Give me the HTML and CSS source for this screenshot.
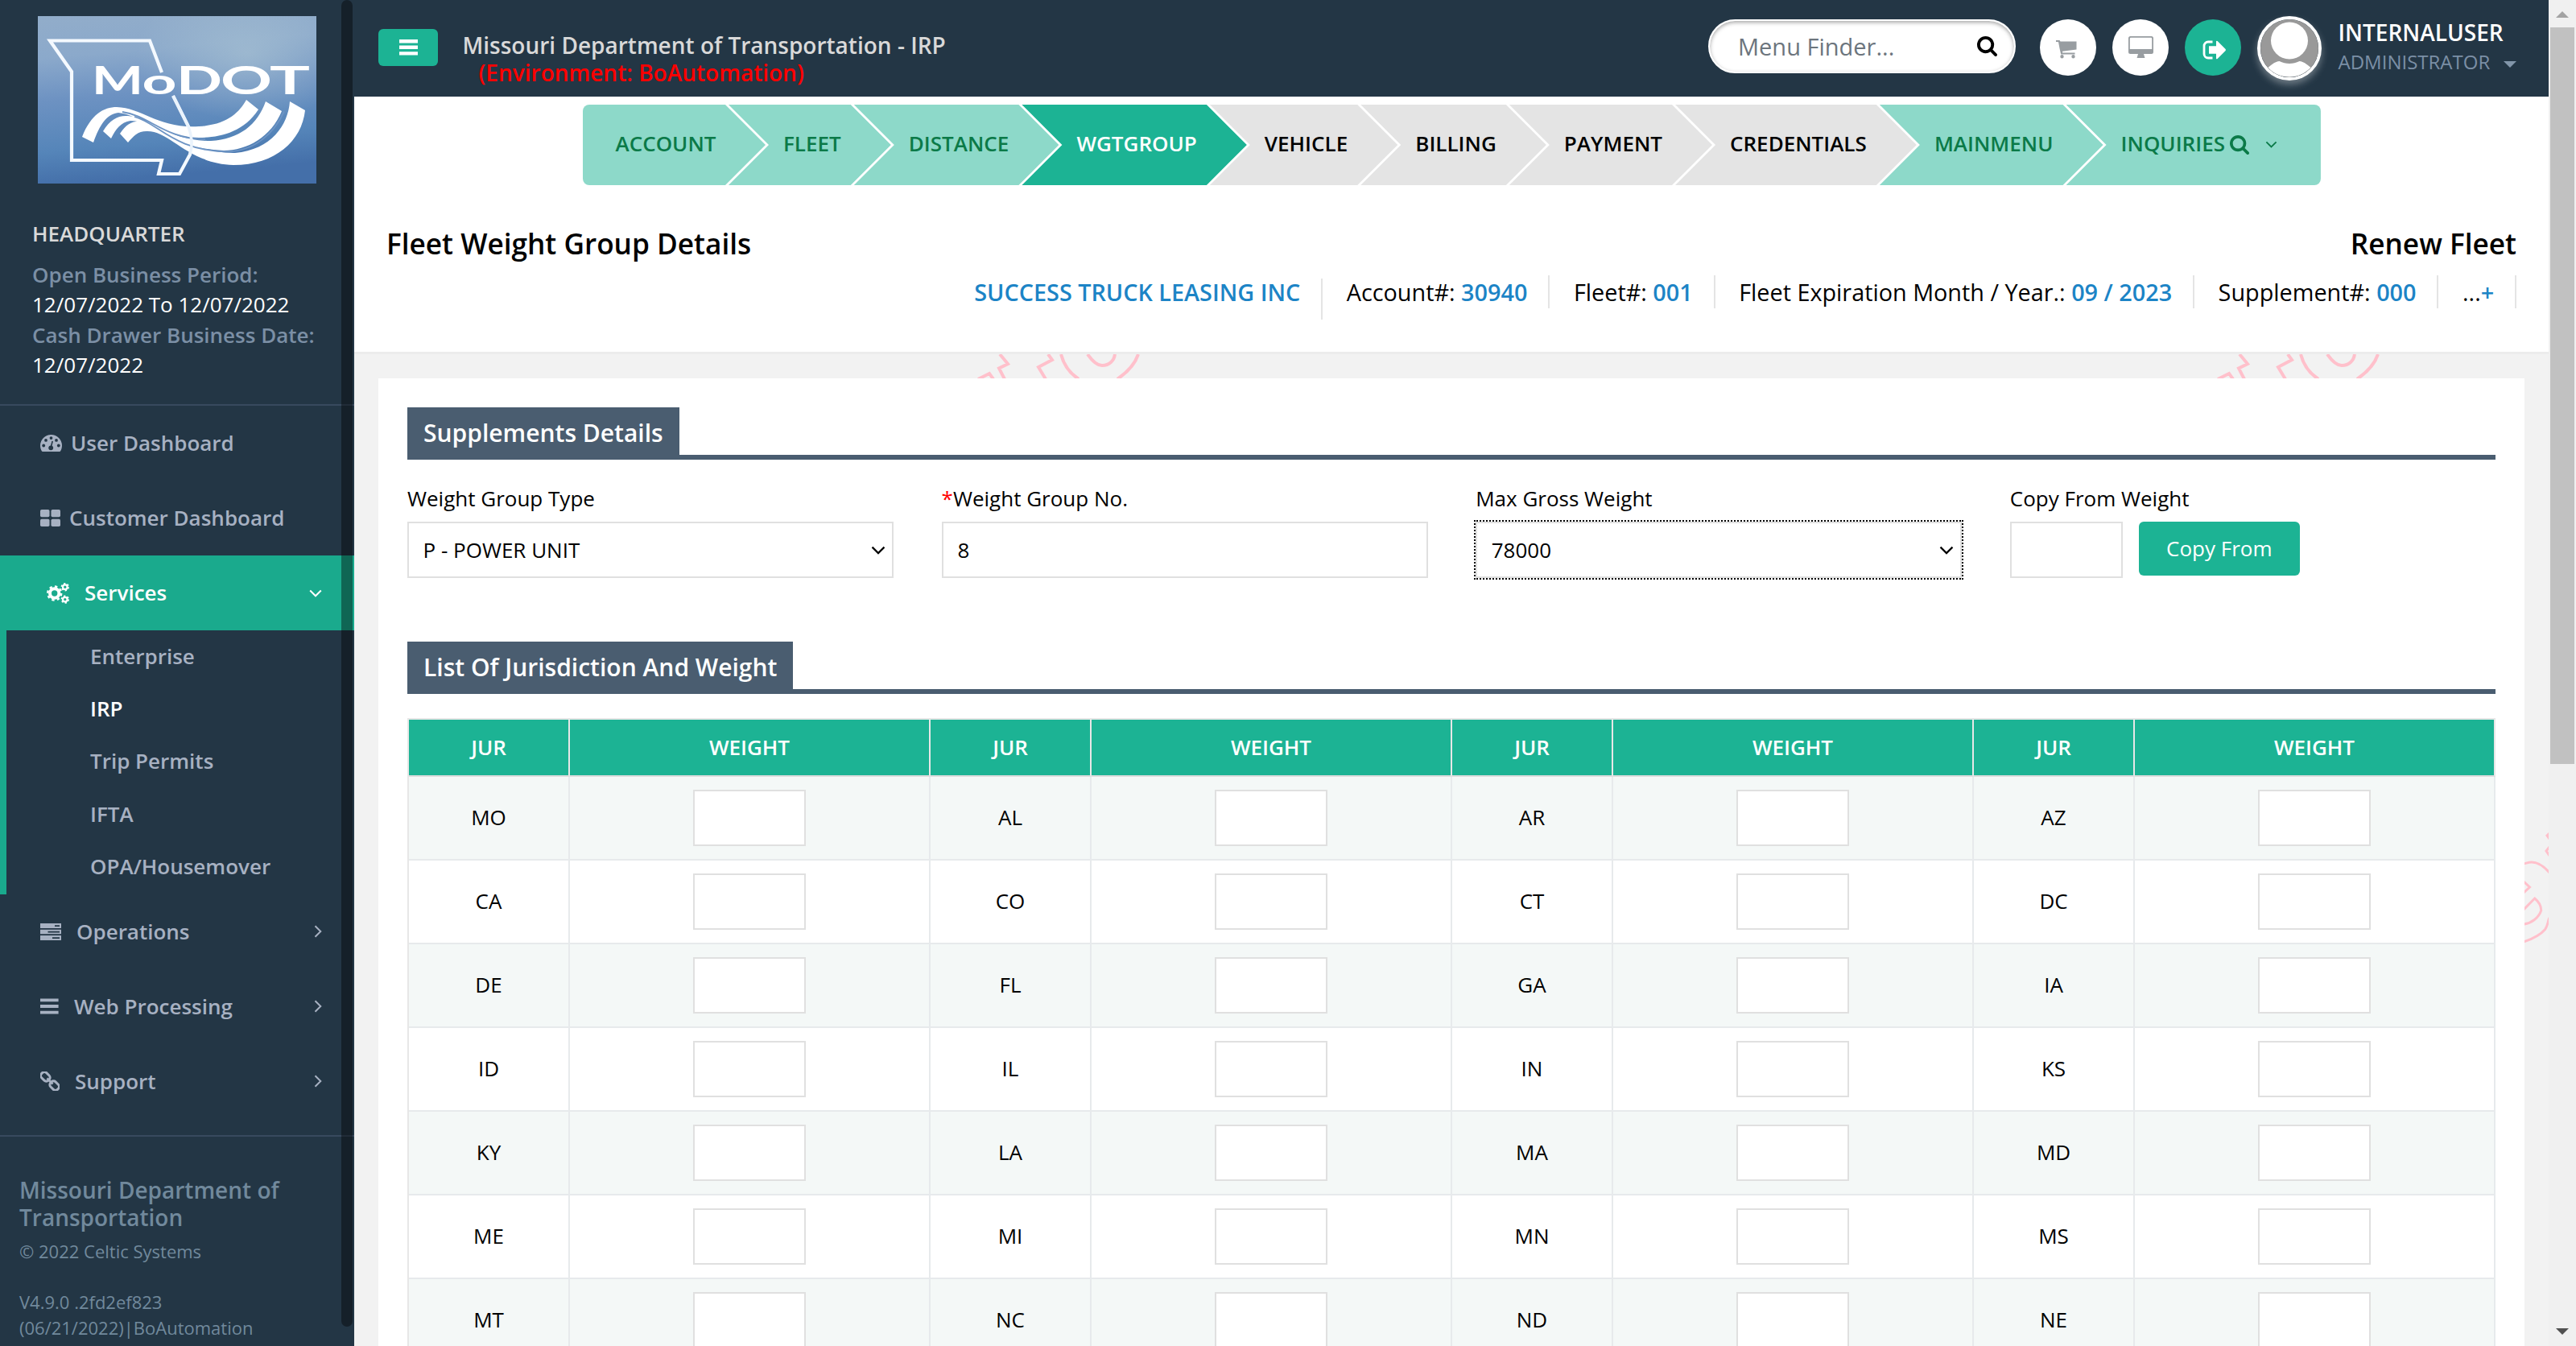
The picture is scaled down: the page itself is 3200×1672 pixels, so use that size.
FILE: index.html
```html
<!DOCTYPE html>
<html lang="en">
<head>
<meta charset="utf-8">
<title>Fleet Weight Group Details</title>
<link rel="stylesheet" href="styles.css">
</head>
<body>
<svg class="defs" width="0" height="0">
  <symbol id="i-search" viewBox="64 128 1664 1664"><path d="M1216 832q0-185-131.500-316.500t-316.500-131.500-316.500 131.500-131.500 316.500 131.500 316.500 316.500 131.500 316.500-131.500 131.500-316.500zm512 832q0 52-38 90t-90 38q-54 0-90-38l-343-342q-179 124-399 124-143 0-273.500-55.500t-225-150-150-225-55.500-273.500 55.500-273.500 150-225 225-150 273.500-55.500 273.500 55.500 225 150 150 225 55.500 273.500q0 220-124 399l343 343q37 37 37 90z"/></symbol>
  <symbol id="i-down" viewBox="0 0 16 10"><path d="M1.200 1.500 8 8.300l6.800-6.800" fill="none" stroke="currentColor" stroke-width="2"/></symbol>
  <symbol id="i-right" viewBox="0 0 10 16"><path d="M1.500 1.200 8.300 8l-6.800 6.800" fill="none" stroke="currentColor" stroke-width="2"/></symbol>
  <symbol id="i-mark" viewBox="0 0 230 30"><path d="M15 31 29 24l5 7M42 0l10 12-11 5.500L48 31M102 0l5 7-17 9 9 15M118 0c3 12 10 23 22 31M151 0c7 10 12 14 18 14 9 0 15-6 16-14M214 0c-4 12-13 22-26 31" fill="none" stroke="#ffc0cb" stroke-width="4"/></symbol>
</svg>

<aside class="sidebar">
  <section class="profile">
    <svg class="logo" viewBox="0 0 346 208" preserveAspectRatio="none">
      <defs>
        <linearGradient id="sky" x1="0" y1="0" x2=".15" y2="1"><stop offset="0" stop-color="#92adca"/><stop offset=".25" stop-color="#8ba9cb"/><stop offset=".5" stop-color="#6d92c2"/><stop offset=".8" stop-color="#5585b9"/><stop offset="1" stop-color="#446fa9"/></linearGradient>
        <radialGradient id="glow" cx=".75" cy=".22" r=".4"><stop offset="0" stop-color="#a5bfd2" stop-opacity=".75"/><stop offset="1" stop-color="#a5bfd2" stop-opacity="0"/></radialGradient>
      </defs>
      <rect width="346" height="208" fill="url(#sky)"/>
      <rect width="346" height="208" fill="url(#glow)"/>
      <path d="M154 70 139 30.500H15L42 69v110h112l-4 17h26l13-24c4-12 2-24-2-35l-19-38" fill="none" stroke="#f4f9ff" stroke-width="4.200"/>
      <g fill="#fff">
        <path d="M55 150C66 122 82 113 98 113c32 1 52 27 102 24 35-2 50-17 59-33l15 12c-19 29-49 35-74 35-50-1-75-29-100-31-15 2-23 15-31 37z"/>
        <path d="M81 143c9-15 19-20 31-19 33 3 48 31 103 31 35-2 58-20 68-49l20 12c-13 32-43 49-72 49-66-2-86-37-116-37-12 2-18 10-24 22z"/>
        <path d="M102 146c8-12 16-16 26-15 32 3 57 40 117 39 45-4 66-35 68-64l19 11c-4 38-37 68-89 68-58-2-78-43-108-42-11 0-16 6-23 14z"/>
      </g>
      <path d="M105 119C140 124 155 152 208 153M120 125C150 133 168 167 235 168.500c34-1 58-22 71-50" fill="none" stroke="#6d94c4" stroke-width="1.800"/>
      <path d="M168 99l19 38c4 11 6 23 2 35" fill="none" stroke="#eaf3fc" stroke-width="3.500"/>
      <g class="logo-text">
        <text x="67" y="97" font-size="47" textLength="64" lengthAdjust="spacingAndGlyphs">M</text>
        <text x="129.500" y="97" font-size="43" textLength="43" lengthAdjust="spacingAndGlyphs">o</text>
        <text x="172" y="97" font-size="47" textLength="57" lengthAdjust="spacingAndGlyphs">D</text>
        <text x="227" y="97" font-size="47" textLength="64" lengthAdjust="spacingAndGlyphs">O</text>
        <text x="288" y="97" font-size="47" textLength="50" lengthAdjust="spacingAndGlyphs">T</text>
      </g>
    </svg>
    <h2 class="office">HEADQUARTER</h2>
    <dl class="period">
      <dt>Open Business Period:</dt><dd>12/07/2022 To 12/07/2022</dd>
      <dt>Cash Drawer Business Date:</dt><dd>12/07/2022</dd>
    </dl>
  </section>
  <nav class="menu">
    <a class="menu-item"><svg width="27" height="21" viewBox="0 0 27 21"><path fill="currentColor" d="M13.500 0A13.500 13.500 0 0 0 0 13.500c0 2.500.7 5 2 7 .2.300.5.500.8.500h21.400c.3 0 .6-.2.800-.5 1.300-2 2-4.500 2-7A13.500 13.500 0 0 0 13.500 0z"/><g fill="#233645"><circle cx="4.200" cy="13.500" r="1.900"/><circle cx="7" cy="6.900" r="1.900"/><circle cx="13.500" cy="4.100" r="1.900"/><circle cx="20" cy="6.900" r="1.900"/><circle cx="22.800" cy="13.500" r="1.900"/><circle cx="13.200" cy="16.300" r="2.900"/></g><path d="M13.300 15.500 15.200 8" stroke="#233645" stroke-width="1.600"/></svg><span>User Dashboard</span></a>
    <a class="menu-item"><svg width="25" height="21" viewBox="0 0 25 21" fill="currentColor"><rect width="11.500" height="9.300" rx="1.800"/><rect x="13.500" width="11.500" height="9.300" rx="1.800"/><rect y="11.700" width="11.500" height="9.300" rx="1.800"/><rect x="13.500" y="11.700" width="11.500" height="9.300" rx="1.800"/></svg><span>Customer Dashboard</span></a>
    <a class="menu-item active"><svg width="29" height="26" viewBox="0 0 29 26" fill="none" stroke="currentColor"><circle cx="9.700" cy="13" r="5.700" stroke-width="4"/><circle cx="9.700" cy="13" r="8.500" stroke-width="2.400" stroke-dasharray="3.340 3.340"/><circle cx="22.800" cy="5.200" r="2.800" stroke-width="2.200"/><circle cx="22.800" cy="5.200" r="4.300" stroke-width="1.800" stroke-dasharray="2.250 2.250"/><circle cx="22.800" cy="20.600" r="2.800" stroke-width="2.200"/><circle cx="22.800" cy="20.600" r="4.300" stroke-width="1.800" stroke-dasharray="2.250 2.250"/></svg><span>Services</span><svg class="arrow" width="16" height="10"><use href="#i-down"/></svg></a>
    <ul class="submenu">
      <li>Enterprise</li><li class="current">IRP</li><li>Trip Permits</li><li>IFTA</li><li>OPA/Housemover</li>
    </ul>
    <a class="menu-item wide"><svg width="26" height="21" viewBox="0 0 26 21"><path fill="currentColor" d="M0 0h26v6H0zM0 7.700h26v5.600H0zM0 15h26v6H0z"/><path fill="#233645" d="M18 2.200h6v1.800h-6zM9.500 9.700H24v1.700H9.500zM15 17.200h9V19h-9z"/></svg><span>Operations</span><svg class="arrow" width="10" height="16"><use href="#i-right"/></svg></a>
    <a class="menu-item wide"><svg width="23" height="20" viewBox="0 0 23 20"><path fill="currentColor" d="M0 .5h22.600v3.800H0zM0 8.100h22.600v3.800H0zM0 15.700h22.600v3.800H0z"/></svg><span>Web Processing</span><svg class="arrow" width="10" height="16"><use href="#i-right"/></svg></a>
    <a class="menu-item wide"><svg width="24" height="24" viewBox="0 0 24 24" fill="none" stroke="currentColor" stroke-width="3"><g transform="rotate(45 12 12)"><rect x="-2" y="7.700" width="12" height="8.600" rx="3.600"/><rect x="14" y="7.700" width="12" height="8.600" rx="3.600"/><path d="M7 12h10" stroke-width="2.600"/></g></svg><span>Support</span><svg class="arrow" width="10" height="16"><use href="#i-right"/></svg></a>
  </nav>
  <footer class="about">
    <h3>Missouri Department of Transportation</h3>
    <p>© 2022 Celtic Systems</p>
    <p class="version">V4.9.0 .2fd2ef823 (06/21/2022)|BoAutomation</p>
  </footer>
  <div class="side-thumb"></div>
</aside>

<main class="main">
  <header class="topbar">
    <button class="burger"><svg width="23" height="20" viewBox="0 0 23 20"><path fill="#fff" d="M0 0h23v4.400H0zM0 7.600h23V12H0zM0 15.200h23v4.400H0z"/></svg></button>
    <div class="app-title">Missouri Department of Transportation - IRP<span class="env">(Environment: BoAutomation)</span></div>
    <div class="finder"><span>Menu Finder...</span><svg width="25" height="25"><use href="#i-search"/></svg></div>
    <div class="round cart"><svg width="27" height="23" viewBox="0 0 27 23"><path fill="#989da1" d="M1 0h4.500l1 1.500H26.500v10L9 13.800l.2 1.700H24.500v2H7.200L5.500 10 4 2H1zM8.500 18a2.200 2.200 0 1 1 0 4.400 2.200 2.200 0 0 1 0-4.400zM22.500 18a2.200 2.200 0 1 1 0 4.400 2.200 2.200 0 0 1 0-4.400z"/></svg></div>
    <div class="round"><svg class="screen" width="31" height="27" viewBox="0 0 31 27"><path fill="#989da1" fill-rule="evenodd" d="M2.500 0h26A2.500 2.500 0 0 1 31 2.500v17a2.500 2.500 0 0 1-2.500 2.500H19l1 3.500.5 1.500h-10l.5-1.500 1-3.500H2.500A2.500 2.500 0 0 1 0 19.500v-17A2.500 2.500 0 0 1 2.500 0zM3 1.800A1.200 1.200 0 0 0 1.800 3v13h27.400V3A1.200 1.200 0 0 0 28 1.800z"/></svg></div>
    <div class="round exit"><svg width="30" height="24" viewBox="0 0 30 24"><path d="M12.500 2H7a5 5 0 0 0-5 5v10a5 5 0 0 0 5 5h5.500" fill="none" stroke="#fff" stroke-width="2.800"/><path fill="#fff" d="M8 7.300h9V1.200Q17.500.2 18.600 1l10 10q.8 1 0 2l-10 10q-1.100.8-1.600-.2v-6.100H8z"/></svg></div>
    <div class="avatar"><svg width="72" height="72" viewBox="0 0 72 72"><circle cx="36" cy="36" r="36" fill="#999"/><circle cx="36" cy="26.500" r="23" fill="#fff"/><path fill="#fff" d="M9.500 60C15 55 19 52.500 23.500 52c8 4 17 4 25 0 4.500.500 8.500 3 14 8C54 68 46 71.500 36 71.500S17 68 9.500 60z"/></svg></div>
    <div class="user"><b>INTERNALUSER</b><span class="role">ADMINISTRATOR<i class="caret"></i></span></div>
  </header>

  <section class="page-head">
    <ol class="steps">
      <li class="done first">ACCOUNT</li><li class="done">FLEET</li><li class="done">DISTANCE</li><li class="now">WGTGROUP</li><li>VEHICLE</li><li>BILLING</li><li>PAYMENT</li><li>CREDENTIALS</li><li class="done">MAINMENU</li><li class="done last">INQUIRIES<svg class="lens" width="24" height="24"><use href="#i-search"/></svg><svg width="15" height="9"><use href="#i-down"/></svg></li>
    </ol>
    <div class="titles"><h1>Fleet Weight Group Details</h1><h1>Renew Fleet</h1></div>
    <ul class="facts">
      <li class="name"><b>SUCCESS TRUCK LEASING INC</b></li>
      <li>Account#: <b>30940</b></li>
      <li>Fleet#: <b>001</b></li>
      <li>Fleet Expiration Month / Year.: <b>09 / 2023</b></li>
      <li>Supplement#: <b>000</b></li>
      <li>...<b>+</b></li>
    </ul>
  </section>

  <div class="backdrop"><svg width="230" height="30"><use href="#i-mark"/></svg><svg width="230" height="30"><use href="#i-mark"/></svg></div>

  <svg class="edge-mark" width="30" height="145" viewBox="0 0 30 145"><path d="M31 5l-3 3 3 4M31 22l-4 5 4 6M-1 43c4-1 7-2 10-2 8 0 15 5 22 13M-1 65l7.500 7L-1 79M-1 100 12.700 86c5 4 8 9 8 15-3 9-12 16-21.700 17M-1 140c12-4 21-9 26.600-15.500C29 120 29 114 31 110" fill="none" stroke="#ffc0cb" stroke-width="3"/></svg>

  <section class="card">
    <h2 class="section"><span>Supplements Details</span></h2>
    <div class="form">
      <label class="field">Weight Group Type<span class="pick"><select><option>P - POWER UNIT</option></select><svg width="18" height="11"><use href="#i-down"/></svg></span></label>
      <label class="field"><span><em>*</em>Weight Group No.</span><input type="text" value="8"></label>
      <label class="field">Max Gross Weight<span class="pick focused"><select><option>78000</option></select><svg width="18" height="11"><use href="#i-down"/></svg></span></label>
      <div class="field">Copy From Weight<span class="copy"><input type="text" class="small"><button>Copy From</button></span></div>
    </div>
    <h2 class="section second"><span>List Of Jurisdiction And Weight</span></h2>
    <table class="grid">
      <colgroup><col class="c-jur"><col class="c-wgt"><col class="c-jur"><col class="c-wgt"><col class="c-jur"><col class="c-wgt"><col class="c-jur"><col class="c-wgt"></colgroup>
      <thead><tr><th>JUR</th><th>WEIGHT</th><th>JUR</th><th>WEIGHT</th><th>JUR</th><th>WEIGHT</th><th>JUR</th><th>WEIGHT</th></tr></thead>
      <tbody>
        <tr><td>MO</td><td><input class="small"></td><td>AL</td><td><input class="small"></td><td>AR</td><td><input class="small"></td><td>AZ</td><td><input class="small"></td></tr>
        <tr><td>CA</td><td><input class="small"></td><td>CO</td><td><input class="small"></td><td>CT</td><td><input class="small"></td><td>DC</td><td><input class="small"></td></tr>
        <tr><td>DE</td><td><input class="small"></td><td>FL</td><td><input class="small"></td><td>GA</td><td><input class="small"></td><td>IA</td><td><input class="small"></td></tr>
        <tr><td>ID</td><td><input class="small"></td><td>IL</td><td><input class="small"></td><td>IN</td><td><input class="small"></td><td>KS</td><td><input class="small"></td></tr>
        <tr><td>KY</td><td><input class="small"></td><td>LA</td><td><input class="small"></td><td>MA</td><td><input class="small"></td><td>MD</td><td><input class="small"></td></tr>
        <tr><td>ME</td><td><input class="small"></td><td>MI</td><td><input class="small"></td><td>MN</td><td><input class="small"></td><td>MS</td><td><input class="small"></td></tr>
        <tr><td>MT</td><td><input class="small"></td><td>NC</td><td><input class="small"></td><td>ND</td><td><input class="small"></td><td>NE</td><td><input class="small"></td></tr>
      </tbody>
    </table>
  </section>
</main>

<div class="scrollbar"><svg width="16" height="8" viewBox="0 0 16 8"><path d="M0 8 8 0l8 8z" fill="#a3a3a3"/></svg><div class="thumb"></div><svg class="end" width="16" height="8" viewBox="0 0 16 8"><path d="M0 0l8 8 8-8z" fill="#505050"/></svg></div>
</body>
</html>
```
FILE: styles.css
```css
* { box-sizing: border-box; }
body {
  margin: 0; display: flex; width: 3200px; height: 1672px; overflow: hidden;
  background: #f2f2f2; color: #000; font: 26px/36px "Open Sans", sans-serif;
}
h1, h2, h3, p, ul, ol, dl, dd { margin: 0; padding: 0; font: inherit; list-style: none; }
svg { display: block; flex: none; }
.defs { position: absolute; }
button, input, select { font: inherit; color: inherit; margin: 0; border: 0; }

/* Sidebar */
.sidebar { position: relative; flex: none; width: 440px; background: #233645; color: #a7b1c2; font-weight: 600; }
.profile { height: 504px; padding: 20px 0 0 40px; border-bottom: 2px solid #384a5e; }
.logo { width: 346px; height: 208px; margin-left: 7px; }
.logo-text { fill: #fff; font-family: Lato, sans-serif; font-weight: 700; }
.office { margin-top: 44px; color: #d9d9d9; font-weight: 600; }
.period { margin-top: 15px; line-height: 37.3px; color: #7b8fa5; }
.period dd { color: #fff; font-weight: 400; }
.menu { height: 908px; border-bottom: 2px solid #384a5e; }
.menu-item { display: flex; align-items: center; gap: 11px; height: 93px; padding: 0 40px 0 50px; }
.menu-item span { padding-bottom: 1.5px; }
.menu-item .arrow { margin-left: auto; }
.menu-item.wide, .menu-item.active { gap: 19px; }
.menu-item.wide span { padding: 0; }
.menu-item.active { gap: 18px; padding-left: 58px; background: #1aaa8d; color: #fff; }
.submenu { height: 327.5px; border-left: 8px solid #1aaa8d; padding-left: 104px; line-height: 65.2px; }
.submenu .current { color: #fff; }
.about { padding: 49px 60px 0 24px; font: 22px/32px "Open Sans", sans-serif; color: #71899c; }
.about h3 { margin-bottom: 9px; font: 600 28px/34px "Open Sans", sans-serif; }
.about .version { margin-top: 31px; }
.side-thumb { position: absolute; top: 0; left: 424px; width: 14px; height: 1648px; border-radius: 7px; background: rgba(0, 0, 0, .4); }

/* Top bar */
.main { position: relative; flex: none; width: 2726px; }
.topbar { display: flex; align-items: flex-start; height: 120px; padding: 0 40px 0 30px; background: #233645; }
.burger { display: flex; justify-content: center; align-items: center; width: 74px; height: 46px; margin-top: 36px; padding: 0; border-radius: 6px; background: #1cb394; }
.app-title { margin: 39px auto 0 30.5px; font: 600 28px/34px "Open Sans", sans-serif; color: #d9d9d9; }
.env { display: block; padding-left: 20px; color: #f00; }
.finder { display: flex; justify-content: space-between; align-items: center; width: 382px; height: 67px; margin: 24px 30px 0 0; padding: 0 21px 0 35px; border: 2px solid #fff; border-radius: 34px; background: #fff; box-shadow: inset 0 2px 5px rgba(0, 0, 0, .35); color: #6c757d; font-size: 29px; }
.finder svg { fill: #000; }
.round { display: flex; justify-content: center; align-items: center; width: 70px; height: 70px; margin: 24px 20px 0 0; border-radius: 50%; background: #fff; }
.cart { padding: 4px 5px 0 0; }
.screen { margin-bottom: 2px; }
.exit { padding: 5px 0 0 4px; background: #1cb394; }
.avatar { width: 80px; height: 80px; margin: 20px 20.5px 0 0; border: 4px solid #fff; border-radius: 50%; box-shadow: 0 5px 10px rgba(255, 255, 255, .35); }
.user { width: 221.5px; padding-top: 22px; color: #fff; font-size: 28px; }
.user b { display: block; font-weight: 600; }
.role { display: flex; align-items: center; justify-content: space-between; margin-top: 1px; font-size: 24px; color: #7b8fa5; }
.caret { margin-top: 6px; border: 8px solid transparent; border-top-color: #8296aa; border-bottom: 0; }

/* Page heading */
.page-head { height: 320px; padding: 10px 40px 0; background: #fff; border-bottom: 3px solid #ececec; }
.steps { display: flex; width: max-content; margin-left: 244px; border-radius: 8px; overflow: hidden; font-weight: 600; }
.steps li {
  display: flex; align-items: center; height: 100px; padding: 0 62.1px 4px 68px; margin-left: -46px; background: #e4e4e4;
  clip-path: polygon(0 0, calc(100% - 50px) 0, 100% 50%, calc(100% - 50px) 100%, 0 100%, 50px 50%);
}
.steps .first { padding: 0 61.5px 4px 40.5px; margin-left: 0; clip-path: polygon(0 0, calc(100% - 50px) 0, 100% 50%, calc(100% - 50px) 100%, 0 100%); }
.steps .last { padding-right: 54px; clip-path: polygon(0 0, 100% 0, 100% 100%, 0 100%, 50px 50%); }
.steps .done { background: #8dd9c9; color: #0b7a48; }
.steps .now { background: #1cb394; color: #fff; }
.steps svg { fill: currentColor; margin-top: 3px; }
.steps .lens { margin: 3px 20px 0 6px; }
.titles { display: flex; justify-content: space-between; margin-top: 51.5px; font: 600 35.200px/41px "Open Sans", sans-serif; }
.facts { display: flex; justify-content: flex-end; margin-top: 19.5px; font-size: 28.800px; line-height: 41px; }
.facts li { height: 41px; padding: 0 25.8px 0 29.7px; border-right: 2px solid #e4e4e4; }
.facts .name { height: 51px; margin-top: 4px; line-height: 34px; }
.facts b { font-weight: 600; color: #1c84c6; }
.backdrop { display: flex; gap: 1310px; height: 30px; padding-left: 760px; }
.edge-mark { position: absolute; top: 1030px; right: 0; }

/* Card */
.card { width: 2666px; height: 1202px; margin-left: 30px; padding: 36px; overflow: hidden; background: #fff; }
.section { display: flex; height: 65px; border-bottom: 6px solid #4a5d70; font: 600 30px/60px "Open Sans", sans-serif; color: #fff; }
.section span { height: 60px; padding: 1.5px 20px 0; background: #4a5d70; }
.form { display: grid; grid-template-columns: repeat(3, 604px) 604px; gap: 59.600px; padding-top: 30px; }
.field { display: flex; flex-direction: column; gap: 11px; }
.field em { font-style: normal; color: #f00; }
.field input, .field select, .small { width: 100%; height: 70px; padding: 0 18px; border: 2px solid #e0e0e0; border-radius: 0; background: #fff; }
.pick { display: grid; align-items: center; }
.pick > * { grid-area: 1 / 1; }
.field select { padding: 0 17.5px; appearance: none; }
.pick svg { justify-self: end; margin: 0 10px 0 0; }
.focused { outline: 2px dotted #000; }
.copy { display: flex; gap: 20px; }
.field .small, .small { width: 140px; display: block; }
.copy button { width: 200px; height: 67px; padding: 0 0 2px; border-radius: 6px; background: #1cb394; color: #fff; }
.second { margin-top: 79px; }

.grid { width: 2594px; margin-top: 30px; table-layout: fixed; border-collapse: separate; border-spacing: 0; border: 2px solid #e7e7e7; border-width: 2px 0 0 2px; text-align: center; }
.c-jur { width: 200px; }
.c-wgt { width: 448px; }
.grid th { height: 71px; padding: 0 0 2px; border: 2px solid #e7e7e7; border-width: 0 2px 2px 0; border-bottom-color: #ddd; background: #1cb394; color: #fff; font-weight: 600; }
.grid td { height: 104px; padding: 0; border: 2px solid #e7eaec; border-width: 0 2px 2px 0; }
.grid td:nth-child(odd) { padding-bottom: 2px; }
.grid tr:nth-child(odd) td { background: #f4f8f7; }
.grid .small { margin: 0 auto; }

/* Window scrollbar */
.scrollbar { display: flex; flex-direction: column; align-items: center; width: 34px; height: 1672px; padding: 14px 0; background: #f0f0f0; }
.thumb { width: 30px; height: 915px; margin-top: 12px; background: #c1c1c1; }
.end { margin-top: auto; }
```
